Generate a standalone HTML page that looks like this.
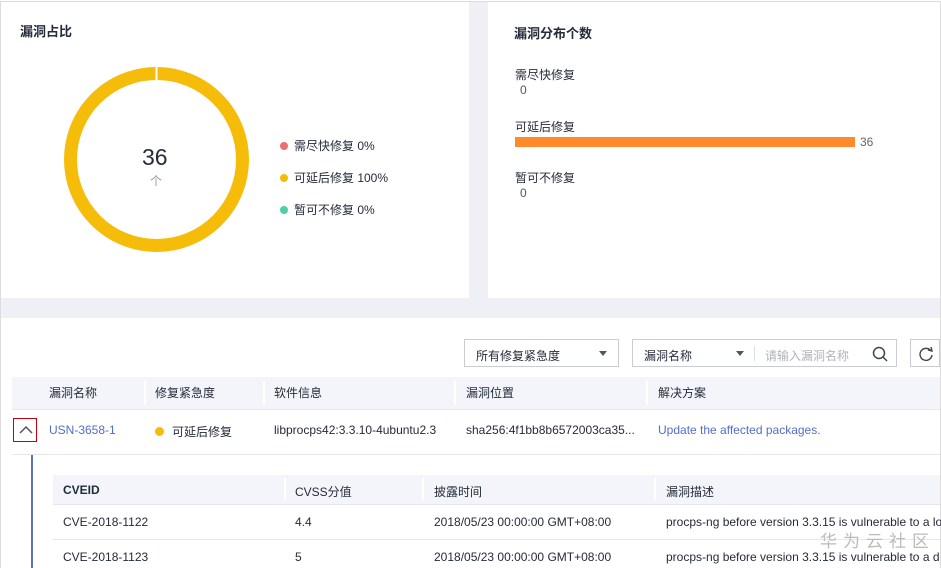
<!DOCTYPE html>
<html><head><meta charset="utf-8"><style>
*{margin:0;padding:0;box-sizing:border-box}
body{width:941px;height:568px;overflow:hidden;background:#fff;font-family:"Liberation Sans","Noto Sans CJK SC",sans-serif;color:#252b3a;font-size:12px;position:relative}
.a{position:absolute;white-space:nowrap}
.g{background:#eef0f5;position:absolute}
.h{font-weight:bold;font-size:13px;color:#252b3a}
.th{background:#f3f5fa;position:absolute;height:32px}
.sep{position:absolute;width:2px;background:#fff;top:4px;bottom:4px}
.line{position:absolute;height:1px;background:#e5e7ec}
.dot{display:inline-block;width:8px;height:8px;border-radius:50%;margin-right:6px;vertical-align:0}
.sel{position:absolute;border:1px solid #c9ccd3;background:#fff;height:28px}
.tri{position:absolute;width:0;height:0;border-left:4px solid transparent;border-right:4px solid transparent;border-top:5px solid #555}
</style></head><body>
<div class="a" style="left:0;top:1px;width:941px;height:1px;background:#dcdcdc"></div>
<div class="a" style="left:0;top:1px;width:1px;height:567px;background:#dcdcdc"></div>
<div class="a" style="left:940px;top:1px;width:1px;height:567px;background:#dcdcdc"></div>
<div class="g" style="left:469px;top:2px;width:19px;height:316px"></div>
<div class="g" style="left:1px;top:298px;width:939px;height:20px"></div>

<div class="a h" style="left:20px;top:21px">漏洞占比</div>
<svg class="a" style="left:0;top:0" width="460" height="290">
<circle cx="156.5" cy="159.5" r="86" fill="none" stroke="#f5bc0a" stroke-width="13"/>
<rect x="155.5" y="65" width="2" height="16" fill="#fff"/>
</svg>
<div class="a" style="left:142px;top:144px;font-size:23px;color:#252b3a">36</div>
<div class="a" style="left:150px;top:172px;font-size:12px;color:#999">个</div>
<div class="a" style="left:280px;top:137px"><span class="dot" style="background:#ee6d6d"></span>需尽快修复 0%</div>
<div class="a" style="left:280px;top:169px"><span class="dot" style="background:#f5bc0a"></span>可延后修复 100%</div>
<div class="a" style="left:280px;top:201px"><span class="dot" style="background:#4fcfa5"></span>暂可不修复 0%</div>

<div class="a h" style="left:514px;top:23px">漏洞分布个数</div>
<div class="a" style="left:515px;top:66px">需尽快修复</div>
<div class="a" style="left:520px;top:83px;color:#555">0</div>
<div class="a" style="left:515px;top:118px">可延后修复</div>
<div class="a" style="left:515px;top:137px;width:340px;height:10px;background:#ff8a2b"></div>
<div class="a" style="left:860px;top:135px;color:#666">36</div>
<div class="a" style="left:515px;top:169px">暂可不修复</div>
<div class="a" style="left:520px;top:186px;color:#555">0</div>

<div class="sel" style="left:464px;top:339px;width:155px"><span class="a" style="left:11px;top:7px">所有修复紧急度</span><span class="tri" style="left:134px;top:11px"></span></div>
<div class="sel" style="left:632px;top:339px;width:265px"><span class="a" style="left:11px;top:7px">漏洞名称</span><span class="tri" style="left:103px;top:11px"></span><span class="a" style="left:121px;top:6px;width:1px;height:15px;background:#ddd"></span><span class="a" style="left:132px;top:7px;color:#b0b3ba">请输入漏洞名称</span>
<svg class="a" style="left:238px;top:5px" width="18" height="18"><circle cx="8" cy="8" r="5.5" fill="none" stroke="#444" stroke-width="1.5"/><line x1="12" y1="12" x2="16" y2="16" stroke="#444" stroke-width="1.5"/></svg></div>
<div class="sel" style="left:910px;top:339px;width:30px"><svg class="a" style="left:6px;top:5px" width="18" height="18"><path d="M14 6 A6 6 0 1 0 15 10" fill="none" stroke="#444" stroke-width="1.4"/><path d="M11 5 L15 6 L14 2" fill="none" stroke="#444" stroke-width="1.4"/></svg></div>

<div class="th" style="left:12px;top:377px;width:928px"></div>
<div class="sep" style="left:144px;top:381px;height:24px"></div>
<div class="sep" style="left:263px;top:381px;height:24px"></div>
<div class="sep" style="left:454px;top:381px;height:24px"></div>
<div class="sep" style="left:646px;top:381px;height:24px"></div>
<div class="a" style="left:49px;top:384px">漏洞名称</div>
<div class="a" style="left:155px;top:384px">修复紧急度</div>
<div class="a" style="left:274px;top:384px">软件信息</div>
<div class="a" style="left:466px;top:384px">漏洞位置</div>
<div class="a" style="left:658px;top:384px">解决方案</div>
<div class="line" style="left:12px;top:409px;width:928px"></div>
<div class="a" style="left:13px;top:418px;width:24px;height:24px;border:1px solid #c7000b"><svg class="a" style="left:5px;top:6px" width="14" height="10"><path d="M1 8 L7 2 L13 8" fill="none" stroke="#555" stroke-width="1.5"/></svg></div>
<div class="a" style="left:49px;top:423px;color:#526ecc">USN-3658-1</div>
<div class="a" style="left:155px;top:423px"><span class="dot" style="background:#f5bc0a;width:9px;height:9px;margin-right:8px"></span>可延后修复</div>
<div class="a" style="left:274px;top:423px">libprocps42:3.3.10-4ubuntu2.3</div>
<div class="a" style="left:466px;top:423px">sha256:4f1bb8b6572003ca35...</div>
<div class="a" style="left:658px;top:423px;color:#526ecc">Update the affected packages.</div>
<div class="line" style="left:12px;top:454px;width:928px"></div>
<div class="a" style="left:31px;top:455px;width:2px;height:113px;background:#5e6fb8"></div>
<div class="th" style="left:53px;top:475px;width:887px;height:29px"></div>
<div class="sep" style="left:284px;top:478px;height:22px"></div>
<div class="sep" style="left:422px;top:478px;height:22px"></div>
<div class="sep" style="left:654px;top:478px;height:22px"></div>
<div class="a" style="left:63px;top:483px;font-weight:bold">CVEID</div>
<div class="a" style="left:295px;top:483px">CVSS分值</div>
<div class="a" style="left:434px;top:483px">披露时间</div>
<div class="a" style="left:666px;top:483px">漏洞描述</div>
<div class="line" style="left:53px;top:504px;width:887px"></div>
<div class="a" style="left:63px;top:515px">CVE-2018-1122</div>
<div class="a" style="left:295px;top:515px">4.4</div>
<div class="a" style="left:434px;top:515px">2018/05/23 00:00:00 GMT+08:00</div>
<div class="a" style="left:666px;top:515px">procps-ng before version 3.3.15 is vulnerable to a lo</div>
<div class="line" style="left:53px;top:539px;width:887px"></div>
<div class="a" style="left:63px;top:550px">CVE-2018-1123</div>
<div class="a" style="left:295px;top:550px">5</div>
<div class="a" style="left:434px;top:550px">2018/05/23 00:00:00 GMT+08:00</div>
<div class="a" style="left:666px;top:550px">procps-ng before version 3.3.15 is vulnerable to a d</div>
<div class="a" style="left:820px;top:527px;font-size:17px;color:#bbb;letter-spacing:6px">华为云社区</div>
</body></html>
